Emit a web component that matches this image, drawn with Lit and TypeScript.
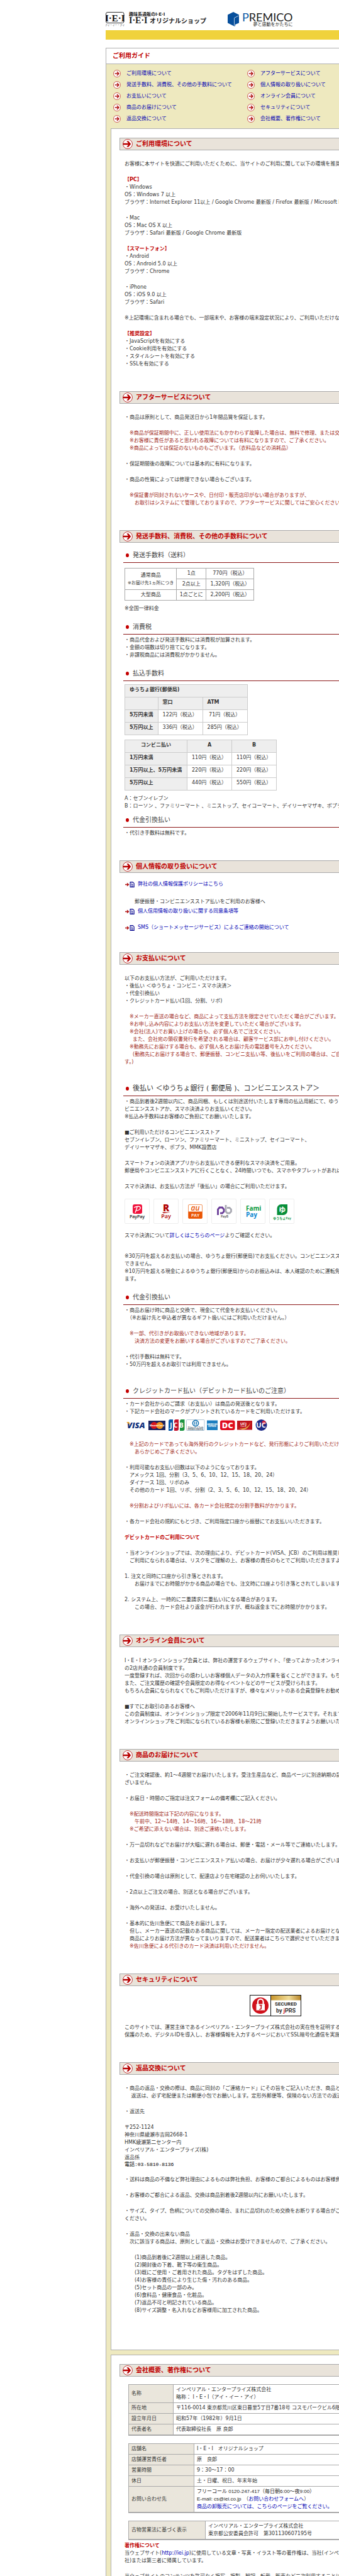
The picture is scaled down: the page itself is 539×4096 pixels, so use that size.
import { LitElement, html, svg, css } from "lit";
import { customElement, property } from "lit/decorators.js";

/** One run of body copy; every array entry is a line. */
const para = (...lines: string[]) => html`<p class="p">${lines.join("\n")}</p>`;
const note = (...lines: string[]) => html`<p class="p note">${lines.join("\n")}</p>`;

const roundArrow = html`<svg class="round" viewBox="0 0 18 18" aria-hidden="true">
  <circle cx="9" cy="9" r="8.3" fill="#fff" stroke="#c03028" stroke-width="1.1" />
  <path d="M4 9h9M9 4.6 13.4 9 9 13.4" fill="none" stroke="#b01010" stroke-width="2.2" />
</svg>`;

const headArrow = html`<svg class="headicon" viewBox="0 0 24 24" aria-hidden="true">
  <circle cx="12" cy="12" r="11.2" fill="#fff" stroke="#b81c1c" stroke-width="1.3" />
  <path d="M1 10.3h12.4L9.6 5h4.2l6 7-6 7H9.6l3.8-5.3H1z" fill="#b80000" />
</svg>`;

const docIcon = html`<svg class="doc" viewBox="0 0 22 13" aria-hidden="true">
  <path d="M0 6.5h7M4.4 3.2 8 6.5 4.4 9.8" fill="none" stroke="#b01010" stroke-width="2" />
  <path d="M11.8.8h6l3 3v8.4h-9z" fill="#fff" stroke="#00008c" stroke-width="1.5" />
  <path d="M13.6 4.3h3.4M13.6 6.6h5.6M13.6 8.8h5.6M13.6 10.7h5.6" stroke="#00008c" stroke-width="1" />
</svg>`;

const payLogos = [
  {
    name: "PayPay",
    art: svg`<rect x="13" y="9" width="15" height="15" rx="3" fill="#f0123c"/>
      <path d="M15 14c5-2.6 10.600-2.400 10.200.800-.4 2.600-4 4.200-7.700 4.200M20.500 12.200l-3.500 10" fill="none" stroke="#fff" stroke-width="1.400"/>
      <text x="20" y="31" text-anchor="middle" font-size="7" font-weight="600" fill="#222">PayPay</text>`,
  },
  {
    name: "Rakuten Pay",
    art: svg`<text x="20" y="20" text-anchor="middle" font-size="15" font-weight="800" fill="#b00000">R</text>
      <path d="M14 21.600h13l-11 1.700z" fill="#b00000"/>
      <text x="20" y="31" text-anchor="middle" font-size="9" font-weight="600" fill="#b00000">Pay</text>`,
  },
  {
    name: "au PAY",
    art: svg`<rect x="9.500" y="9.500" width="22" height="22" rx="1.500" fill="#fff" stroke="#ec6a1a" stroke-width=".7"/>
      <path d="M9.500 20.500h22V30a1.500 1.500 0 0 1-1.500 1.500H11A1.500 1.500 0 0 1 9.500 30z" fill="#ea5504"/>
      <text x="20.500" y="18.500" text-anchor="middle" font-size="12" font-style="italic" font-weight="600" fill="#ea5504">au</text>
      <text x="20.500" y="28.500" text-anchor="middle" font-size="7" font-weight="600" fill="#fff">PAY</text>`,
  },
  {
    name: "PayB",
    art: svg`<path d="M10.500 26V17l2.500-3h4.500l2.500 3v3.500L17.500 23H14" fill="none" stroke="#6a3d98" stroke-width="2.800"/>
      <path d="M23 10v10.500l2.500 2.500H29l2.500-2.500V17L29 14.500h-4" fill="none" stroke="#a9a9b2" stroke-width="2.800"/>
      <text x="21" y="29.500" text-anchor="middle" font-size="5" font-weight="600" fill="#444">PayB</text>`,
  },
  {
    name: "FamiPay",
    art: svg`<text x="9" y="19" font-size="10" font-weight="700" fill="#0a9a3c">Fami</text>
      <text x="9" y="29" font-size="10" font-weight="700" fill="#0a86d0">Pay</text>`,
  },
  {
    name: "ゆうちょPay",
    art: svg`<path d="M12.500 15.500a6.500 6.500 0 0 1 6.500-6.500h10v10.500a6.500 6.500 0 0 1-6.500 6.500h-10z" fill="#078f3a"/>
      <text x="20.700" y="21.500" text-anchor="middle" font-size="11" font-weight="700" fill="#fff">ゆ</text>
      <text x="20.500" y="33" text-anchor="middle" font-size="5" font-weight="600" fill="#078f3a">ゆうちょPay</text>`,
  },
];

const cardBrands = html`<svg class="brands" viewBox="0 0 232 18" role="img" aria-label="VISA MasterCard JCB Diners Club AMERICAN EXPRESS DC UFJ Card UC">
  <text x="4" y="14" font-size="13" font-weight="800" font-style="italic" fill="#10307c">VISA</text>
  <path d="M3 4h4l2 5z" fill="#e9a020" />
  <rect x="38" y="2" width="27" height="15" fill="#1c2460" />
  <circle cx="47" cy="9.500" r="5.500" fill="#d8141c" /><circle cx="56" cy="9.500" r="5.500" fill="#f29320" />
  <text x="51.500" y="11" text-anchor="middle" font-size="4" font-weight="700" fill="#fff">MasterCard</text>
  <path d="M72 0h5v15a3 3 0 0 1-3 3h-4V3a3 3 0 0 1 2-3z" fill="#0a57a8" />
  <path d="M81 0h5v15a3 3 0 0 1-3 3h-4V3a3 3 0 0 1 2-3z" fill="#c4122c" />
  <path d="M90 0h5.500v15a3 3 0 0 1-3 3H88V3a3 3 0 0 1 2-3z" fill="#1b9440" />
  <text x="83" y="12.500" text-anchor="middle" font-size="10" font-weight="700" fill="#fff">J C B</text>
  <rect x="98.500" y=".5" width="28.500" height="17" rx="1" fill="#fff" stroke="#9cb8cc" stroke-width=".8" />
  <circle cx="113" cy="6" r="4.600" fill="#fff" stroke="#0f6fb0" stroke-width="1.600" />
  <path d="M111.600 3.400v5.200M114.400 3.400v5.200" stroke="#0f6fb0" stroke-width="1.300" />
  <text x="113" y="14" text-anchor="middle" class="serif" font-size="5" fill="#234">Diners Club</text>
  <text x="113" y="17" text-anchor="middle" class="serif" font-size="3" font-weight="700" fill="#234">INTERNATIONAL</text>
  <rect x="131" y="1.500" width="17" height="15.500" fill="#1b7dc0" />
  <text x="139.500" y="8.500" text-anchor="middle" font-size="3" font-weight="700" fill="#fff">AMERICAN</text>
  <text x="139.500" y="12" text-anchor="middle" font-size="3" font-weight="700" fill="#fff">EXPRESS</text>
  <rect x="152" y="1.500" width="23.500" height="15.500" rx="3" fill="#e00b1c" />
  <text x="163.700" y="14" text-anchor="middle" font-size="13" font-weight="800" fill="#fff">DC</text>
  <rect x="179" y="2" width="24" height="14.500" fill="#c0141c" />
  <path d="M181 13.500c9 3 16-1 19-9-1 7-6 12-13 11.500z" fill="#e8b84c" />
  <text x="189" y="8.500" text-anchor="middle" font-size="6" font-weight="700" fill="#fff">UFJ</text>
  <text x="189" y="12" text-anchor="middle" font-size="4" fill="#fff">Card</text>
  <circle cx="217.500" cy="9" r="9" fill="#1c2a86" /><circle cx="221.500" cy="5" r="3" fill="#d8243c" />
  <text x="217" y="13" text-anchor="middle" font-size="11" font-weight="700" fill="#fff">UC</text>
</svg>`;

const secureBadge = html`<svg class="badge" viewBox="0 0 82 34" role="img" aria-label="SECURED by JPRS">
  <defs><linearGradient id="gold"><stop offset="0" stop-color="#c8962c" /><stop offset=".6" stop-color="#f1dc96" /><stop offset="1" stop-color="#b8862a" /></linearGradient></defs>
  <rect x=".5" y=".5" width="81" height="33" fill="#fff" stroke="#111" />
  <rect x="34" y="1" width="47" height="7.500" fill="url(#gold)" />
  <path d="M33.500 0v34" stroke="#111" />
  <circle cx="17" cy="17" r="13" fill="#d0111c" />
  <path d="M13 15v-4a4.300 4.300 0 0 1 8.600 0v4" fill="none" stroke="#fff" stroke-width="2.200" />
  <rect x="10.500" y="14.500" width="13.500" height="10" fill="#fff" />
  <path d="M15.500 16.500h4M18.300 16.500v4.500q0 2-3 2" fill="none" stroke="#c00d18" stroke-width="1.600" />
  <text x="57.500" y="17" text-anchor="middle" class="badge-text" font-size="8" font-weight="700" fill="#222">SECURED</text>
  <text x="57.500" y="28" text-anchor="middle" class="badge-text" font-size="9" font-weight="600" fill="#222">by <tspan fill="#d0111c">j</tspan>PRS</text>
</svg>`;

@customElement("section-title")
class SectionTitle extends LitElement {
  @property() label = "";
  static styles = css`
    :host { display: block; }
    h2 {
      display: flex; align-items: center; gap: 5px; box-sizing: border-box; height: 20px; margin: 0; padding-left: 4px;
      border: 1px solid #aaa; background: #e9e3da; color: #c00000; font-size: 10px; line-height: 14px; white-space: nowrap;
    }
    .headicon { width: 16px; height: 16px; flex: none; }
  `;
  render() {
    return html`<h2>${headArrow}<span>${this.label}</span></h2>`;
  }
}

@customElement("app-root")
class AppRoot extends LitElement {
  static styles = css`
    :host {
      display: block; overflow: clip; background: #fff; color: #333;
      font-family: "DejaVu Sans", "Noto Sans CJK JP", sans-serif; font-size: 8px; line-height: 12px;
    }
    a { color: #0000b4; text-decoration: none; }
    .shell { box-sizing: border-box; min-width: 708px; padding: 19px 0 0 168px; }
    .brandbar { display: flex; height: 23px; margin-bottom: 6px; white-space: nowrap; }
    .iei { width: 30px; height: 23px; margin-right: 7px; }
    .shop { display: flex; flex-direction: column; width: 157px; color: #222; }
    .shop small { font-size: 7px; font-weight: 700; line-height: 8px; }
    .shop strong { font-size: 10px; font-weight: 600; line-height: 12px; }
    .shop strong span { font-family: "Liberation Serif", serif; font-size: 14px; }
    .cube { width: 18px; height: 23px; margin-right: 5px; }
    .premico { display: flex; flex-direction: column; align-items: flex-end; color: #222; }
    .premico b { font-family: "Lato", sans-serif; font-size: 18px; font-weight: 400; line-height: 17px; }
    .premico b i { color: #0b58a6; font-style: normal; }
    .premico small { font-size: 7px; line-height: 6px; }
    .stripe { height: 15px; margin-bottom: 13px; background: #f0d23c; }
    .guide { border: 1px solid #b0b0b0; background: #eee9bf; }
    .guide h1 {
      height: 24px; margin: 0; padding-left: 10px; border-bottom: 1px solid #b0b0b0; background: #fff;
      color: #c00000; font-size: 10px; line-height: 24px;
    }
    .toc { display: grid; grid-template-columns: 213px 1fr; padding: 6px 11px; }
    .toc a { display: flex; align-items: center; gap: 9px; line-height: 18px; }
    .round { width: 12px; height: 12px; }
    .card { margin: 0 7px 7px; padding: 14px 13px 0; border: 1px solid #b0b0b0; background: #fff; }
    .card.main { padding-bottom: 19px; }
    .copy { display: flex; flex-direction: column; gap: 13px; padding: 16px 8px 37px; }
    .copy.open { padding-bottom: 0; }
    .flow { padding: 0 8px 37px; }
    .p { margin: 0; white-space: pre; }
    .note { color: #a02820; }
    .hot { color: #c00000; font-weight: 700; }
    .sub {
      display: flex; align-items: center; gap: 6px; margin: 16px -8px 3px 6px; padding: 0 0 4px 4px; border-bottom: 1px solid #8c1818;
      color: #444; font-size: 10px; font-weight: 400; line-height: 14px; white-space: nowrap;
    }
    .sub::before { content: ""; width: 5px; height: 6px; border-radius: 50%; background: #c40000; }
    .sub.first { margin-top: 13px; }
    .sub.near { margin-top: 9px; }
    .sub.far { margin-top: 29px; }
    .sub.big { font-size: 11px; color: #333; }
    .body { padding: 0 8px; }
    .stack { display: flex; flex-direction: column; gap: 13px; }
    .tail { padding-bottom: 37px; }
    table { border-collapse: collapse; }
    th, td { padding: 2px 4px; border: 1px solid #aaa; font-weight: 400; text-align: left; white-space: pre; }
    .fee { margin: 8px 0 7px; }
    .fee th, .fee td { text-align: center; }
    .fee td:nth-last-child(2) { min-width: 38px; }
    .fee td:last-child { min-width: 67px; }
    .fee small { font-size: 7px; }
    .rate { margin: 5px 0 7px; }
    .rate th, .rate td { box-sizing: border-box; height: 20px; padding: 2px 7px 5px; border-color: #ccc; }
    .rate th { background: #eee; font-weight: 700; }
    .rate td { min-width: 71px; }
    .rate .mid { text-align: center; }
    .rate .w { min-width: 52px; }
    .rate .ww { min-width: 99px; }
    .doclink { display: flex; align-items: center; gap: 5px; margin-left: 1px; line-height: 18px; white-space: nowrap; }
    .doc { width: 15px; height: 9px; }
    .privacy { padding: 9px 8px 30px; }
    .privacy .p { margin-top: 13px; }
    .privacy .last { margin-top: 8px; }
    .pays { display: flex; gap: 6px; margin: 0; padding: 0; list-style: none; }
    .pays li { box-sizing: border-box; width: 40px; height: 40px; border: 1px solid #eee; border-radius: 2px; }
    .pays svg { display: block; width: 40px; height: 40px; margin: -1px; font-family: "Open Sans", "Noto Sans CJK JP", sans-serif; }
    .gap { margin-top: 8px; }
    .brands { display: block; width: 232px; height: 18px; margin: 6px 0 16px; font-family: "Open Sans", sans-serif; }
    .serif { font-family: "Liberation Serif", serif; }
    .badge { display: block; width: 82px; height: 34px; margin: 14px auto 12px; }
    .badge-text { font-family: "Roboto", sans-serif; }
    .address { font-style: normal; }
    .phone { margin: 0; color: #000; font-family: "Liberation Mono", "Noto Sans CJK JP", monospace; line-height: 10px; }
    .about { width: calc(100% - 12px); margin: 12px 0 0 14px; border-bottom: 2px solid #aaa; }
    .about th { width: 62px; background: #eae6dc; }
    .about.b th { width: 95px; }
    .about.c th { width: 113px; }
    .plain { font-family: "Liberation Sans", "Noto Sans CJK JP", sans-serif; color: #222; }
    .legal { padding: 3px 8px 0; }
    .legal .next { margin-top: 13px; }
  `;

  private toc = [
    "ご利用環境について", "アフターサービスについて",
    "発送手数料、消費税、その他の手数料について", "個人情報の取り扱いについて",
    "お支払いについて", "オンライン会員について",
    "商品のお届けについて", "セキュリティについて",
    "返品交換について", "会社概要、著作権について",
  ];

  private header() {
    return html`<header class="brandbar">
      <svg class="iei" viewBox="0 0 30 23" role="img" aria-label="I・E・I">
        <rect x=".5" y=".5" width="28.500" height="17" rx="2.500" fill="#fff" stroke="#333" />
        <text x="14.800" y="14.500" text-anchor="middle" class="serif" font-size="15" font-weight="700" fill="#111">I·E·I</text>
        <text x="14.500" y="22.500" text-anchor="middle" font-size="4" fill="#222">アイ・イー・アイ</text>
      </svg>
      <div class="shop"><small>趣味系通販のI·E·I</small><strong><span>I·E·I</span> オリジナルショップ</strong></div>
      <svg class="cube" viewBox="0 0 18 23" aria-hidden="true">
        <path d="M9 0l9 4.500v13L12 20v2.500h-2L0 17.500v-13z" fill="#074f9c" />
        <path d="M10.500 22V9.500L17.500 6" fill="none" stroke="#dfe9f5" stroke-width=".8" />
      </svg>
      <div class="premico"><b><i>P</i>REMICO</b><small>夢と感動をかたちに</small></div>
    </header>`;
  }

  private environment() {
    return html`<section-title label="ご利用環境について"></section-title>
      <div class="copy">
        ${para("お客様に本サイトを快適にご利用いただくために、当サイトのご利用に関して以下の環境を推奨いたします。")}
        <div>
          <p class="p hot">【PC】</p>
          ${para("・Windows", "OS：Windows 7 以上", "ブラウザ：Internet Explorer 11以上 / Google Chrome 最新版 / Firefox 最新版 / Microsoft Edge 最新版")}
        </div>
        ${para("・Mac", "OS：Mac OS X 以上", "ブラウザ：Safari 最新版 / Google Chrome 最新版")}
        <div>
          <p class="p hot">【スマートフォン】</p>
          ${para("・Android", "OS：Android 5.0 以上", "ブラウザ：Chrome")}
        </div>
        ${para("・iPhone", "OS：iOS 9.0 以上", "ブラウザ：Safari")}
        ${para("※上記環境に含まれる場合でも、一部端末や、お客様の端末設定状況により、ご利用いただけない場合がございます。")}
        <div>
          <p class="p hot">【推奨設定】</p>
          ${para("・JavaScriptを有効にする", "・Cookie利用を有効にする", "・スタイルシートを有効にする", "・SSLを有効にする")}
        </div>
      </div>`;
  }

  private afterService() {
    return html`<section-title label="アフターサービスについて"></section-title>
      <div class="copy">
        ${para("・商品は原則として、商品発送日から1年間品質を保証します。")}
        ${note("　※商品が保証期間中に、正しい使用法にもかかわらず故障した場合は、無料で修理、または交換いたします。", "　※お客様に責任があると思われる故障については有料になりますので、ご了承ください。", "　※商品によっては保証のないものもございます。（衣料品などの消耗品）")}
        ${para("・保証期間後の故障については基本的に有料になります。")}
        ${para("・商品の性質によっては修理できない場合もございます。")}
        ${note("　※保証書が同封されないケースや、日付印・販売店印がない場合がありますが、", "　　お取引はシステムにて管理しておりますので、アフターサービスに関してはご安心ください。")}
      </div>`;
  }

  private fees() {
    return html`<section-title label="発送手数料、消費税、その他の手数料について"></section-title>
      <h3 class="sub first">発送手数料（送料）</h3>
      <div class="body">
        <table class="fee">
          <tr><td rowspan="2">通常商品<br /><small>※お届け先1ヵ所につき</small></td><td>1点</td><td>770円（税込）</td></tr>
          <tr><td>2点以上</td><td>1,320円（税込）</td></tr>
          <tr><td>大型商品</td><td>1点ごとに</td><td>2,200円（税込）</td></tr>
        </table>
        ${para("※全国一律料金")}
      </div>
      <h3 class="sub">消費税</h3>
      <div class="body">${para("・商品代金および発送手数料には消費税が加算されます。", "・金額の端数は切り捨てになります。", "・非課税商品には消費税がかかりません。")}</div>
      <h3 class="sub">払込手数料</h3>
      <div class="body">
        <table class="rate">
          <tr><th colspan="3">ゆうちょ銀行(郵便局)</th></tr>
          <tr><th class="w"></th><th>窓口</th><th>ATM</th></tr>
          <tr><th>5万円未満</th><td>122円（税込）</td><td> 71円（税込）</td></tr>
          <tr><th>5万円以上</th><td>336円（税込）</td><td>285円（税込）</td></tr>
        </table>
        <table class="rate">
          <tr><th class="mid ww">コンビニ払い</th><th class="mid">A</th><th class="mid">B</th></tr>
          <tr><th>1万円未満</th><td>110円（税込）</td><td>110円（税込）</td></tr>
          <tr><th>1万円以上、5万円未満</th><td>220円（税込）</td><td>220円（税込）</td></tr>
          <tr><th>5万円以上</th><td>440円（税込）</td><td>550円（税込）</td></tr>
        </table>
        ${para("A：セブンイレブン", "B：ローソン 、ファミリーマート 、ミニストップ、セイコーマート、デイリーヤマザキ、ポプラ、MMK設置店")}
      </div>
      <h3 class="sub near">代金引換払い</h3>
      <div class="flow">${para("・代引き手数料は無料です。")}</div>`;
  }

  private privacy() {
    return html`<section-title label="個人情報の取り扱いについて"></section-title>
      <div class="privacy">
        <a class="doclink" href="#policy">${docIcon}弊社の個人情報保護ポリシーはこちら</a>
        ${para("　　郵便振替・コンビニエンスストア払いをご利用のお客様へ")}
        <a class="doclink" href="#consent">${docIcon}個人信用情報の取り扱いに関する同意条項等</a>
        <a class="doclink last" href="#sms">${docIcon}SMS（ショートメッセージサービス）によるご連絡の開始について</a>
      </div>`;
  }

  private payment() {
    return html`<section-title label="お支払いについて"></section-title>
      <div class="copy open">
        ${para("以下のお支払い方法が、ご利用いただけます。", "・後払い ＜ゆうちょ・コンビニ・スマホ決済＞", "・代金引換払い", "・クレジットカード払い(1回、分割、リボ)")}
        ${note("　※メーカー直送の場合など、商品によって支払方法を限定させていただく場合がございます。", "　※お申し込み内容によりお支払い方法を変更していただく場合がございます。", "　※会社(法人)でお買い上げの場合も、必ず個人名でご注文ください。", "　  また、会社宛の領収書発行を希望される場合は、顧客サービス部にお申し付けください。", "　※勤務先にお届けする場合も、必ず個人名とお届け先の電話番号を入力ください。", "　  (勤務先にお届けする場合で、郵便振替、コンビニ支払い等、後払いをご利用の場合は、ご自宅の住所も必要で", "す。)")}
      </div>
      <h3 class="sub big far">後払い ＜ゆうちょ銀行 ( 郵便局 )、コンビニエンスストア＞</h3>
      <div class="body stack">
        ${para("・商品到着後2週間以内に、商品同梱、もしくは別途送付いたします専用の払込用紙にて、ゆうちょ銀行、コン", "ビニエンスストアか、スマホ決済よりお支払いください。", "※払込み手数料はお客様のご負担にてお願いいたします。")}
        ${para("■ご利用いただけるコンビニエンスストア", "セブンイレブン、ローソン、ファミリーマート、ミニストップ、セイコーマート、", "デイリーヤマザキ、ポプラ、MMK設置店")}
        ${para("スマートフォンの決済アプリからお支払いできる便利なスマホ決済をご用意。", "郵便局やコンビニエンスストアに行くことなく、24時間いつでも、スマホやタブレットがあればお支払いできます。")}
        ${para("スマホ決済は、お支払い方法が「後払い」の場合にご利用いただけます。")}
        <ul class="pays">
          ${payLogos.map((l) => html`<li><svg viewBox="0 0 40 40" role="img" aria-label=${l.name}>${l.art}</svg></li>`)}
        </ul>
        <p class="p">スマホ決済について<a href="#smartpay">詳しくはこちらのページ</a>よりご確認ください。</p>
        <div class="gap">${para("※30万円を超えるお支払いの場合、ゆうちょ銀行(郵便局)でお支払ください。コンビニエンスストアではお支払い", "できません。", "※10万円を超える現金によるゆうちょ銀行(郵便局)からのお振込みは、本人確認のために運転免許証等が必要となり", "ます。")}</div>
      </div>
      <h3 class="sub">代金引換払い</h3>
      <div class="body stack">
        ${para("・商品お届け時に商品と交換で、現金にて代金をお支払いください。", "　（※お届け先と申込者が異なるギフト扱いにはご利用いただけません。）")}
        ${note("　※一部、代引きがお取扱いできない地域があります。", "　　決済方法の変更をお願いする場合がございますのでご了承ください。")}
        ${para("・代引手数料は無料です。", "・50万円を超えるお取引では利用できません。")}
      </div>
      <h3 class="sub far">クレジットカード払い（デビットカード払いのご注意）</h3>
      <div class="body">
        ${para("・カード会社からのご請求（お支払い）は商品の発送後となります。", "・下記カード会社のマークがプリントされているカードをご利用いただけます。")}
        ${cardBrands}
      </div>
      <div class="body stack tail">
        ${note("　※上記のカードであっても海外発行のクレジットカードなど、発行形態によりご利用いただけない場合があります。", "　　あらかじめご了承ください。")}
        ${para("・利用可能なお支払い回数は以下のようになっております。", "　アメックス 1回、分割（3、5、6、10、12、15、18、20、24）", "　ダイナース 1回、リボのみ", "　その他のカード 1回、リボ、分割（2、3、5、6、10、12、15、18、20、24）")}
        ${note("　※分割およびリボ払いには、各カード会社規定の分割手数料がかかります。")}
        ${para("・各カード会社の規約にもとづき、ご利用指定口座から振替にてお支払いいただきます。")}
        <p class="p hot">デビットカードのご利用について</p>
        ${para("・当オンラインショップでは、次の理由により、デビットカード(VISA、JCB）のご利用は推奨しておりません。", "　ご利用になられる場合は、リスクをご理解の上、お客様の責任のもとでご利用いただきますようお願いします。")}
        ${para("1. 注文と同時に口座から引き落とされます。", "　　お届けまでにお時間がかかる商品の場合でも、注文時に口座より引き落とされてしまいます。")}
        ${para("2. システム上、一時的に二重請求(二重払い)になる場合があります。", "　　この場合、カード会社より返金が行われますが、概ね返金までにお時間がかかります。")}
      </div>`;
  }

  private membership() {
    return html`<section-title label="オンライン会員について"></section-title>
      <div class="copy">
        ${para("I・E・I オンラインショップ会員とは、弊社の運営するウェブサイト、「使ってよかったオンラインショップ」", "の2店共通の会員制度です。", "一度登録すれば、次回からの煩わしいお客様個人データの入力作業を省くことができます。もちろん無料です。", "また、ご注文履歴の確認や会員限定のお得なイベントなどのサービスが受けられます。", "もちろん会員になられなくてもご利用いただけますが、様々なメリットのある会員登録をお勧めいたします。")}
        ${para("■すでにお取引のあるお客様へ", "この会員制度は、オンラインショップ限定で2006年11月9日に開始したサービスです。それまでに当社", "オンラインショップをご利用になられているお客様も新規にご登録いただきますようお願いいたします。")}
      </div>`;
  }

  private delivery() {
    return html`<section-title label="商品のお届けについて"></section-title>
      <div class="copy">
        ${para("・ご注文確認後、約1〜4週間でお届けいたします。受注生産品など、商品ページに別途納期の記載がある場合はこの限りでは", "ざいません。")}
        ${para("・お届日・時間のご指定は注文フォームの備考欄にご記入ください。")}
        ${note("　※配送時間指定は下記の内容になります。", "　　午前中、12〜14時、14〜16時、16〜18時、18〜21時", "　※ご希望に添えない場合は、別途ご連絡いたします。")}
        ${para("・万一品切れなどでお届けが大幅に遅れる場合は、郵便・電話・メール等でご連絡いたします。")}
        ${para("・お支払いが郵便振替・コンビニエンスストア払いの場合、お届けが少々遅れる場合がございます。")}
        ${para("・代金引換の場合は原則として、配達店より在宅確認の上お伺いいたします。")}
        ${para("・2点以上ご注文の場合、別送となる場合がございます。")}
        ${para("・海外への発送は、お受けいたしません。")}
        <div>
          ${para("・基本的に佐川急便にて商品をお届けします。", "　但し、メーカー直送の記載のある商品に関しては、メーカー指定の配送業者によるお届けとなります。", "　商品によりお届け方法が異なってまいりますので、配送業者はこちらで選択させていただきます。")}
          ${note("　※佐川急便による代引きのカード決済は利用いただけません。")}
        </div>
      </div>`;
  }

  private security() {
    return html`<section-title label="セキュリティについて"></section-title>
      <div class="flow">
        ${secureBadge}
        ${para("このサイトでは、運営主体であるインペリアル・エンタープライズ株式会社の実在性を証明すると共にお客様の情報", "保護のため、デジタルIDを導入し、お客様情報を入力するページにおいてSSL暗号化通信を実施しております。")}
      </div>`;
  }

  private returns() {
    return html`<section-title label="返品交換について"></section-title>
      <div class="copy">
        ${para("・商品の返品・交換の際は、商品に同封の「ご連絡カード」にその旨をご記入いただき、商品と一緒にご返送ください。", "　 返送は、必ず宅配便または郵便小包でお願いします。定形外郵便等、保険のない方法での返送はご遠慮ください。")}
        ${para("・返送先")}
        <address class="address">
          ${para("〒252-1124", "神奈川県綾瀬市吉岡2668-1", "HMK綾瀬第二センター内", "インペリアル・エンタープライズ(株)", "返品係")}
          <p class="phone">電話:03-5810-8136</p>
        </address>
        ${para("・送料は商品の不備など弊社理由によるものは弊社負担、お客様のご都合によるものはお客様負担となります。")}
        ${para("・お客様のご都合による返品、交換は商品到着後2週間以内にお願いいたします。")}
        ${para("・サイズ、タイプ、色柄についての交換の場合、まれに品切れのため交換をお断りする場合がございます。ご了承", "ください。")}
        ${para("・返品・交換の出来ない商品", "　次に該当する商品は、原則として返品・交換はお受けできませんので、ご了承ください。")}
        ${para("　　(1)商品到着後に2週間以上経過した商品。", "　　(2)開封後の下着、靴下等の衛生商品。", "　　(3)既にご使用・ご着用された商品。タグをはずした商品。", "　　(4)お客様の責任により生じた傷・汚れのある商品。", "　　(5)セット商品の一部のみ。", "　　(6)食料品・健康食品・化粧品。", "　　(7)返品不可と明記されている商品。", "　　(8)サイズ調整・名入れなどお客様用に加工された商品。")}
      </div>`;
  }

  private company() {
    return html`<section-title label="会社概要、著作権について"></section-title>
      <table class="about">
        <tr><th>名称</th><td>インペリアル・エンタープライズ株式会社<br />略称： I・E・I（アイ・イー・アイ）</td></tr>
        <tr><th>所在地</th><td>〒116-0014 東京都荒川区東日暮里5丁目7番18号 コスモパークビル6階</td></tr>
        <tr><th>設立年月日</th><td>昭和57年（1982年）9月1日</td></tr>
        <tr><th>代表者名</th><td>代表取締役社長　原 良郎</td></tr>
      </table>
      <table class="about b">
        <tr><th>店舗名</th><td>I・E・I　オリジナルショップ</td></tr>
        <tr><th>店舗運営責任者</th><td>原　良郎</td></tr>
        <tr><th>営業時間</th><td>9：30〜17：00</td></tr>
        <tr><th>休日</th><td>土・日曜、祝日、年末年始</td></tr>
        <tr><th>お問い合わせ先</th><td><span class="plain">フリーコール 0120-247-417（毎日朝6:00〜夜9:00）</span><br /><span class="plain">E-mail: cs@iei.co.jp</span>　（<a href="#form">お問い合わせフォームへ</a>）<br /><a href="#wholesale">商品の卸販売については、こちらのページをご覧ください。</a></td></tr>
      </table>
      <table class="about c">
        <tr><th>古物営業法に基づく表示</th><td>インペリアル・エンタープライズ株式会社<br />東京都公安委員会許可　第301130607195号</td></tr>
      </table>
      <div class="legal">
        <p class="p hot">著作権について</p>
        <p class="p">当ウェブサイト(<a href="#top">http://iei.jp</a>)に使用している文章・写真・イラスト等の著作権は、当社(インペリアル・エンタープライズ株式会</p>
        ${para("社)または第三者に帰属しています。")}
        <p class="p next">当ウェブサイトのコンテンツを許可なく複写、複製、翻訳、転載、販売など二次利用することは、禁じられています。</p>
      </div>`;
  }

  render() {
    return html`<div class="shell" lang="ja">
      ${this.header()}
      <div class="stripe"></div>
      <main class="guide">
        <h1>ご利用ガイド</h1>
        <nav class="toc">${this.toc.map((t, i) => html`<a href="#s${i}">${roundArrow}<span>${t}</span></a>`)}</nav>
        <div class="card main">
          ${this.environment()} ${this.afterService()} ${this.fees()} ${this.privacy()} ${this.payment()}
          ${this.membership()} ${this.delivery()} ${this.security()} ${this.returns()}
        </div>
        <div class="card">${this.company()}</div>
      </main>
    </div>`;
  }
}
